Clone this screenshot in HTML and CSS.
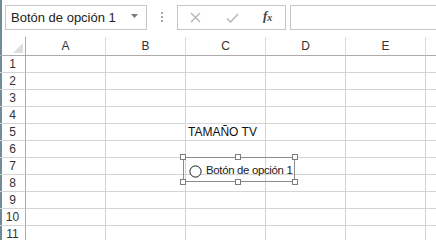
FILE: index.html
```html
<!DOCTYPE html>
<html lang="es">
<head>
<meta charset="utf-8">
<link rel="stylesheet" href="styles.css">
</head>
<body>
<div class="app">
  <div class="fbar">
    <div class="namebox">
      <span class="nb-text">Botón de opción 1</span>
      <svg class="nb-arrow" width="7" height="4" viewBox="0 0 7 4"><polygon points="0,0 7,0 3.5,4" fill="#7a7a7a"/></svg>
    </div>
    <div class="dots"><i></i><i></i><i></i></div>
    <div class="fbtns">
      <svg class="ic-x" width="11" height="11" viewBox="0 0 11 11"><path d="M1 1 L10 10 M10 1 L1 10" stroke="#b4b4b4" stroke-width="1.3" fill="none"/></svg>
      <svg class="ic-ok" width="13" height="10" viewBox="0 0 13 10"><path d="M1 5.5 L4.5 9 L12 1" stroke="#b4b4b4" stroke-width="1.4" fill="none"/></svg>
      <span class="fx">f<span class="fx-x">x</span></span>
    </div>
    <div class="finput"></div>
  </div>
  <div class="sheet">
    <div class="c hd corner"><svg width="10" height="10" viewBox="0 0 10 10"><polygon points="10,0 10,10 0,10" fill="#dedede"/></svg></div>
    <div class="c hd">A</div><div class="c hd">B</div><div class="c hd">C</div><div class="c hd">D</div><div class="c hd">E</div><div class="c hd"></div>

    <div class="c rh">1</div><div class="c"></div><div class="c"></div><div class="c"></div><div class="c"></div><div class="c"></div><div class="c"></div>
    <div class="c rh">2</div><div class="c"></div><div class="c"></div><div class="c"></div><div class="c"></div><div class="c"></div><div class="c"></div>
    <div class="c rh">3</div><div class="c"></div><div class="c"></div><div class="c"></div><div class="c"></div><div class="c"></div><div class="c"></div>
    <div class="c rh">4</div><div class="c"></div><div class="c"></div><div class="c"></div><div class="c"></div><div class="c"></div><div class="c"></div>
    <div class="c rh">5</div><div class="c"></div><div class="c"></div><div class="c txt">TAMAÑO TV</div><div class="c"></div><div class="c"></div><div class="c"></div>
    <div class="c rh">6</div><div class="c"></div><div class="c"></div><div class="c"></div><div class="c"></div><div class="c"></div><div class="c"></div>
    <div class="c rh">7</div><div class="c"></div><div class="c"></div><div class="c"></div><div class="c"></div><div class="c"></div><div class="c"></div>
    <div class="c rh">8</div><div class="c"></div><div class="c"></div><div class="c"></div><div class="c"></div><div class="c"></div><div class="c"></div>
    <div class="c rh">9</div><div class="c"></div><div class="c"></div><div class="c"></div><div class="c"></div><div class="c"></div><div class="c"></div>
    <div class="c rh">10</div><div class="c"></div><div class="c"></div><div class="c"></div><div class="c"></div><div class="c"></div><div class="c"></div>
    <div class="c rh">11</div><div class="c"></div><div class="c"></div><div class="c"></div><div class="c"></div><div class="c"></div><div class="c"></div>
  </div>

  <div class="ctrl">
    <svg class="radio" width="13" height="13" viewBox="0 0 13 13"><circle cx="6.5" cy="6.5" r="5.6" fill="#fff" stroke="#1a1a1a" stroke-width="1"/></svg>
    <span class="ctrl-text">Botón de opción 1</span>
    <i class="hdl h-tl"></i><i class="hdl h-tm"></i><i class="hdl h-tr"></i>
    <i class="hdl h-bl"></i><i class="hdl h-bm"></i><i class="hdl h-br"></i>
  </div>
</div>
</body>
</html>
```

FILE: styles.css
```css
html, body {
  margin: 0;
  padding: 0;
  background: #fff;
  overflow: hidden;
}
body {
  width: 436px;
  height: 240px;
  font-family: "Liberation Sans", Arial, sans-serif;
  color: #222;
}
.app {
  position: relative;
  width: 436px;
  height: 240px;
  overflow: hidden;
  box-shadow: inset 2px 0 0 #6f8b95;
}
.fbar {
  height: 37px;
  box-sizing: border-box;
  padding: 5px 0 0 5px;
  display: flex;
  align-items: flex-start;
}
.namebox {
  width: 142px;
  height: 25px;
  box-sizing: border-box;
  border: 1px solid #c6c6c6;
  display: flex;
  align-items: center;
  padding: 0 8px 0 5px;
  background: #fff;
}
.nb-text {
  font-size: 13px;
  line-height: 16px;
  color: #222;
  white-space: nowrap;
}
.nb-arrow {
  margin-left: auto;
  margin-top: -4px;
  flex-shrink: 0;
}
.dots {
  margin-left: 14px;
  padding-top: 7px;
  display: flex;
  flex-direction: column;
  gap: 2px;
}
.dots i {
  display: block;
  width: 2px;
  height: 2px;
  background: #a8a8a8;
}
.fbtns {
  margin-left: 14px;
  width: 109px;
  height: 25px;
  box-sizing: border-box;
  border: 1px solid #c6c6c6;
  display: flex;
  align-items: center;
  padding-left: 12px;
}
.fbtns svg {
  flex-shrink: 0;
}
.ic-ok {
  margin-left: 25px;
}
.fx {
  margin-left: 24px;
  margin-top: -2px;
  font-family: "Liberation Serif", "Times New Roman", serif;
  font-style: italic;
  font-weight: bold;
  font-size: 13px;
  color: #444;
  line-height: 14px;
}
.fx-x {
  font-size: 10px;
  position: relative;
  top: 1px;
}
.finput {
  margin-left: 4px;
  flex: 1;
  height: 25px;
  box-sizing: border-box;
  border: 1px solid #c6c6c6;
  border-right: none;
}
.sheet {
  display: grid;
  grid-template-columns: 26px repeat(6, 80px);
  grid-template-rows: 19px;
  grid-auto-rows: 17px;
  width: 506px;
}
.c {
  box-sizing: border-box;
  border-right: 1px solid #d4d4d4;
  border-bottom: 1px solid #d4d4d4;
  font-size: 12px;
  line-height: 16px;
  white-space: nowrap;
}
.hd {
  text-align: center;
  line-height: 18px;
  color: #333;
  border-bottom-color: #ababab;
  border-right-color: #dadada;
}
.corner {
  border-right-color: #ababab;
  display: flex;
  justify-content: flex-end;
  align-items: flex-end;
  padding: 0 2px 2px 0;
}
.rh {
  text-align: center;
  color: #333;
  border-right-color: #ababab;
}
.txt {
  padding-left: 2px;
  color: #111;
  overflow: visible;
}
.ctrl {
  position: absolute;
  left: 183px;
  top: 157px;
  width: 112px;
  height: 25px;
  box-sizing: border-box;
  border: 1px solid #8c8c8c;
  display: flex;
  align-items: flex-start;
  padding-left: 5px;
}
.radio {
  flex-shrink: 0;
  margin-top: 7px;
}
.ctrl-text {
  margin-left: 4px;
  margin-top: 5px;
  font-size: 11.4px;
  letter-spacing: -0.32px;
  line-height: 14px;
  color: #1a1a1a;
  white-space: nowrap;
}
.hdl {
  position: absolute;
  width: 6px;
  height: 6px;
  box-sizing: border-box;
  border: 1px solid #7c7c7c;
  background: #fff;
}
.h-tl { left: -4px; top: -4px; }
.h-tm { left: 51px; top: -4px; }
.h-tr { right: -4px; top: -4px; }
.h-bl { left: -4px; bottom: -4px; }
.h-bm { left: 51px; bottom: -4px; }
.h-br { right: -4px; bottom: -4px; }
```
